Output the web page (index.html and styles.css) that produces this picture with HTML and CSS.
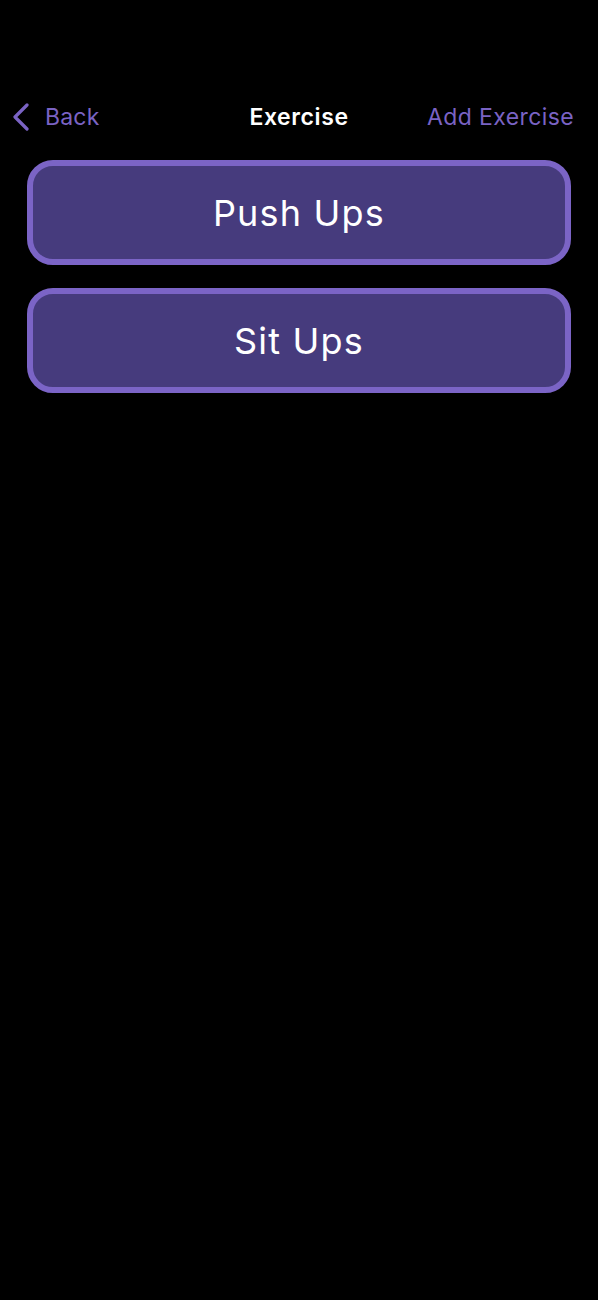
FILE: index.html
```html
<!DOCTYPE html>
<html>
<head>
<meta charset="utf-8">
<link rel="stylesheet" href="styles.css">
</head>
<body>
<div class="screen">
  <header class="nav">
    <div class="nav-left">
      <span class="back">
        <svg class="chev" width="18" height="28" viewBox="0 0 18 28"><path d="M15 2 L3 14 L15 26" fill="none" stroke="#7a63c4" stroke-width="3.2" stroke-linecap="round" stroke-linejoin="round"/></svg>
        <span class="back-text">Back</span>
      </span>
    </div>
    <div class="nav-title">Exercise</div>
    <div class="nav-right"><span class="add">Add Exercise</span></div>
  </header>
  <main class="list">
    <div class="item">Push Ups</div>
    <div class="item">Sit Ups</div>
  </main>
</div>
</body>
</html>
```

FILE: styles.css
```css
html, body {
  margin: 0;
  padding: 0;
  background: #000;
}
.screen {
  width: 598px;
  height: 1300px;
  background: #000;
  font-family: Inter, "Noto Sans", sans-serif;
  overflow: hidden;
}
.nav {
  margin-top: 95px;
  height: 44px;
  display: grid;
  grid-template-columns: 1fr auto 1fr;
  align-items: center;
}
.nav-left {
  padding-left: 12px;
  display: flex;
  align-items: center;
}
.back {
  display: flex;
  align-items: center;
  gap: 15px;
  color: #7a63c4;
  font-size: 23px;
  letter-spacing: 0.2px;
}
.chev {
  display: block;
}
.nav-title {
  color: #fff;
  font-size: 23px;
  font-weight: 600;
  letter-spacing: 0.6px;
}
.nav-right {
  display: flex;
  justify-content: flex-end;
  padding-right: 24px;
}
.add {
  color: #7a63c4;
  font-size: 23px;
  letter-spacing: 0.4px;
}
.list {
  margin-top: 21px;
  padding: 0 27px;
  display: flex;
  flex-direction: column;
  gap: 23px;
}
.item {
  box-sizing: border-box;
  height: 105px;
  border: 6px solid #7b64c6;
  border-radius: 26px;
  background: #463b7d;
  color: #fff;
  font-size: 36px;
  letter-spacing: 1.2px;
  display: flex;
  align-items: center;
  justify-content: center;
}
```
